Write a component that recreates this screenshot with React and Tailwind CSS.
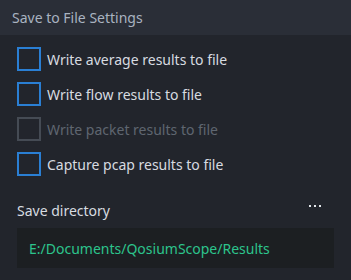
const options = [
  { label: 'Write average results to file', disabled: false },
  { label: 'Write flow results to file', disabled: false },
  { label: 'Write packet results to file', disabled: true },
  { label: 'Capture pcap results to file', disabled: false },
];

function CheckRow({ label, disabled }) {
  return (
    <label className="flex items-center gap-[6px] h-[24px]">
      <span
        className={
          'w-[24px] h-[24px] border-2 ' +
          (disabled ? 'border-[#454b54]' : 'border-[#2a7fd4]')
        }
      ></span>
      <span className={disabled ? 'text-[#5f6670]' : 'text-[#d7dbe0]'}>{label}</span>
    </label>
  );
}

export default function App() {
  return (
    <div
      className="w-[351px] h-[280px] bg-[#22252c] text-[14px] overflow-hidden"
      style={{ fontFamily: '"Noto Sans", "Open Sans", sans-serif' }}
    >
      <div className="h-[35px] bg-[#2a2e37] flex items-center px-[12px] text-[#a9b3c0]">
        Save to File Settings
      </div>
      <div className="pt-[12px] px-[17px] flex flex-col gap-[11px]">
        {options.map((o) => (
          <CheckRow key={o.label} label={o.label} disabled={o.disabled} />
        ))}
      </div>
      <div className="px-[17px] mt-[24px]">
        <div className="flex items-center justify-between h-[20px]">
          <span className="text-[#d7dbe0]">Save directory</span>
          <span className="flex gap-[3px] mr-[13px] -mt-[8px]">
            <span className="w-[2px] h-[2px] bg-[#e2e6ea]"></span>
            <span className="w-[2px] h-[2px] bg-[#e2e6ea]"></span>
            <span className="w-[2px] h-[2px] bg-[#e2e6ea]"></span>
          </span>
        </div>
        <div className="mt-[8px] h-[40px] bg-[#1c1f22] flex items-center px-[12px] text-[#2cc48c]">
          E:/Documents/QosiumScope/Results
        </div>
      </div>
    </div>
  );
}
